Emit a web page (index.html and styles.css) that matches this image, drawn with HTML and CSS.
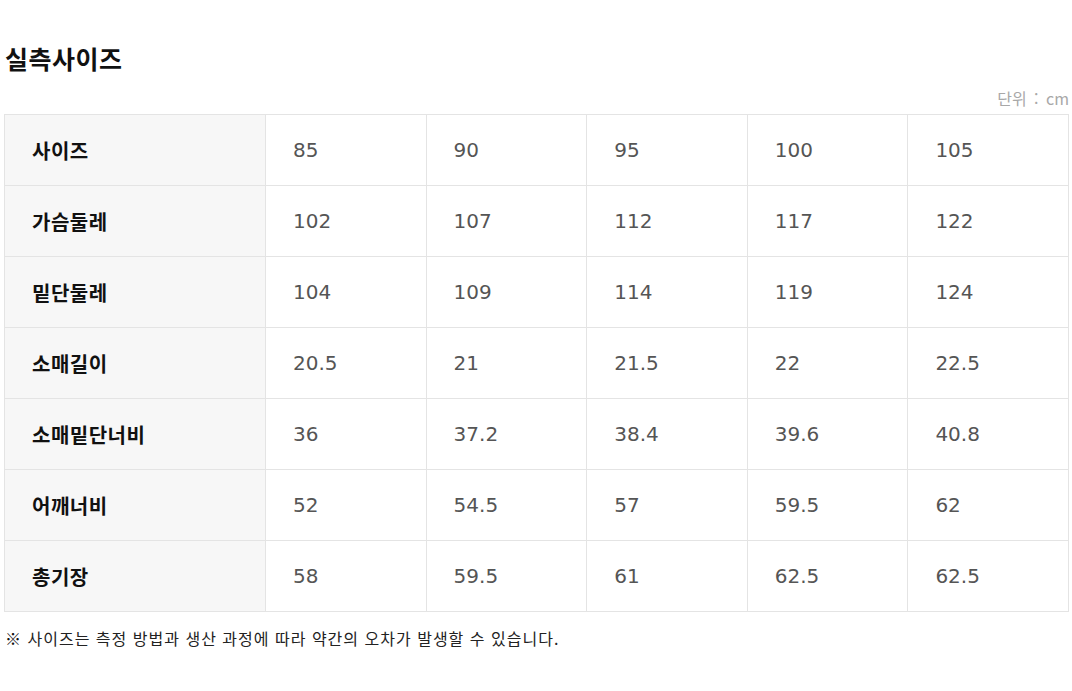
FILE: index.html
```html
<!DOCTYPE html>
<html lang="ko">
<head>
<meta charset="utf-8">
<link rel="stylesheet" href="styles.css">
</head>
<body>
<div class="page">
  <h1 class="title">실측사이즈</h1>
  <div class="unit">단위 : cm</div>
  <table class="size-table">
    <colgroup><col class="col-head"><col><col><col><col><col></colgroup>
    <tbody>
      <tr><th>사이즈</th><td>85</td><td>90</td><td>95</td><td>100</td><td>105</td></tr>
      <tr><th>가슴둘레</th><td>102</td><td>107</td><td>112</td><td>117</td><td>122</td></tr>
      <tr><th>밑단둘레</th><td>104</td><td>109</td><td>114</td><td>119</td><td>124</td></tr>
      <tr><th>소매길이</th><td>20.5</td><td>21</td><td>21.5</td><td>22</td><td>22.5</td></tr>
      <tr><th>소매밑단너비</th><td>36</td><td>37.2</td><td>38.4</td><td>39.6</td><td>40.8</td></tr>
      <tr><th>어깨너비</th><td>52</td><td>54.5</td><td>57</td><td>59.5</td><td>62</td></tr>
      <tr><th>총기장</th><td>58</td><td>59.5</td><td>61</td><td>62.5</td><td>62.5</td></tr>
    </tbody>
  </table>
  <p class="note"><span class="mark">※</span> 사이즈는 측정 방법과 생산 과정에 따라 약간의 오차가 발생할 수 있습니다.</p>
</div>
</body>
</html>
```
FILE: styles.css
```css
html, body {
  margin: 0;
  padding: 0;
  background: #fff;
}
body {
  font-family: "Noto Sans CJK KR", "Noto Sans", sans-serif;
  color: #111;
}
.page {
  padding: 40px 4px 0 4px;
  width: 1064px;
}
.title {
  margin: 0 0 0 1px;
  font-size: 25px;
  line-height: 36px;
  font-weight: 700;
  letter-spacing: 0.5px;
  color: #111;
}
.unit {
  margin-top: 10px;
  text-align: right;
  font-size: 16px;
  line-height: 24px;
  word-spacing: 3px;
  color: #a8a8a8;
  margin-bottom: 4px;
  margin-right: -1px;
}
.size-table {
  width: 1065px;
  border-collapse: collapse;
  table-layout: fixed;
}
.col-head {
  width: 261px;
}
.size-table th,
.size-table td {
  border: 1px solid #e4e4e4;
  height: 70px;
  padding: 0 0 0 27px;
  text-align: left;
  vertical-align: middle;
}
.size-table th {
  background: #f7f7f7;
  font-size: 20px;
  font-weight: 700;
  letter-spacing: 0.5px;
  color: #111;
}
.size-table td {
  font-family: "DejaVu Sans", sans-serif;
  font-size: 20px;
  color: #555;
}
.note {
  margin: 14px 0 0 1px;
  font-size: 16px;
  line-height: 24px;
  letter-spacing: 1px;
  color: #222;
}
.note .mark {
  font-weight: 700;
  color: #111;
}
```
